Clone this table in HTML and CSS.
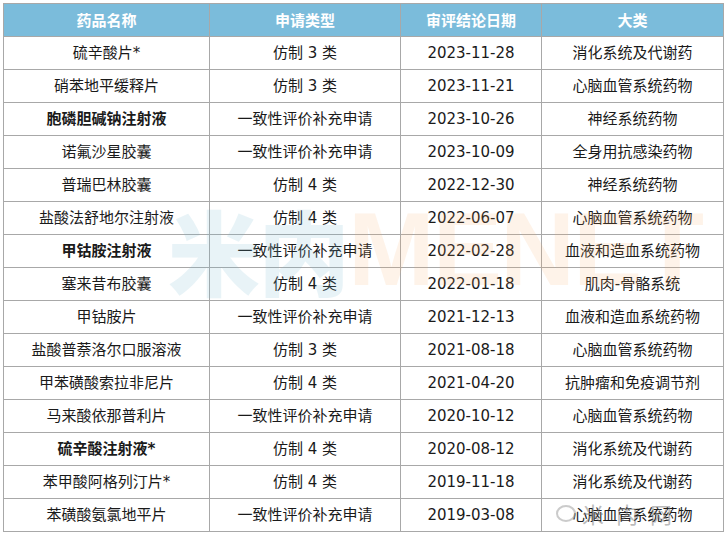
FILE: index.html
```html
<!DOCTYPE html>
<html lang="zh">
<head>
<meta charset="utf-8">
<link rel="stylesheet" href="styles.css">
</head>
<body>
<div class="wrap">
<table class="drugs">
<colgroup><col class="c1"><col class="c2"><col class="c3"><col class="c4"></colgroup>
<thead>
<tr><th>药品名称</th><th>申请类型</th><th>审评结论日期</th><th>大类</th></tr>
</thead>
<tbody>
<tr><td>硫辛酸片*</td><td>仿制 3 类</td><td>2023-11-28</td><td>消化系统及代谢药</td></tr>
<tr><td>硝苯地平缓释片</td><td>仿制 3 类</td><td>2023-11-21</td><td>心脑血管系统药物</td></tr>
<tr><td class="b">胞磷胆碱钠注射液</td><td>一致性评价补充申请</td><td>2023-10-26</td><td>神经系统药物</td></tr>
<tr><td>诺氟沙星胶囊</td><td>一致性评价补充申请</td><td>2023-10-09</td><td>全身用抗感染药物</td></tr>
<tr><td>普瑞巴林胶囊</td><td>仿制 4 类</td><td>2022-12-30</td><td>神经系统药物</td></tr>
<tr><td>盐酸法舒地尔注射液</td><td>仿制 4 类</td><td>2022-06-07</td><td>心脑血管系统药物</td></tr>
<tr><td class="b">甲钴胺注射液</td><td>一致性评价补充申请</td><td>2022-02-28</td><td>血液和造血系统药物</td></tr>
<tr><td>塞来昔布胶囊</td><td>仿制 4 类</td><td>2022-01-18</td><td>肌肉-骨骼系统</td></tr>
<tr><td>甲钴胺片</td><td>一致性评价补充申请</td><td>2021-12-13</td><td>血液和造血系统药物</td></tr>
<tr><td>盐酸普萘洛尔口服溶液</td><td>仿制 3 类</td><td>2021-08-18</td><td>心脑血管系统药物</td></tr>
<tr><td>甲苯磺酸索拉非尼片</td><td>仿制 4 类</td><td>2021-04-20</td><td>抗肿瘤和免疫调节剂</td></tr>
<tr><td>马来酸依那普利片</td><td>一致性评价补充申请</td><td>2020-10-12</td><td>心脑血管系统药物</td></tr>
<tr><td class="b">硫辛酸注射液*</td><td>仿制 4 类</td><td>2020-08-12</td><td>消化系统及代谢药</td></tr>
<tr><td>苯甲酸阿格列汀片*</td><td>仿制 4 类</td><td>2019-11-18</td><td>消化系统及代谢药</td></tr>
<tr><td>苯磺酸氨氯地平片</td><td>一致性评价补充申请</td><td>2019-03-08</td><td>心脑血管系统药物</td></tr>
</tbody>
</table>
<div class="mark"><span class="mk-cn">米内</span><span class="mk-en">MENET</span></div>
<div class="wx"><span class="wx-icon"></span><span class="wx-text">米内网</span></div>
</div>
</body>
</html>
```

FILE: styles.css
```css
html, body {
  margin: 0;
  padding: 0;
  background: #ffffff;
}
body {
  padding: 3px;
  font-family: "DejaVu Sans", "Noto Sans CJK SC", sans-serif;
}
.wrap {
  position: relative;
  width: 720px;
}
.drugs {
  border-collapse: collapse;
  width: 720px;
  table-layout: fixed;
  font-size: 15px;
  color: #1a1a1a;
}
.c1 { width: 206px; }
.c2 { width: 191px; }
.c3 { width: 141px; }
.c4 { width: 182px; }
.drugs th, .drugs td {
  border: 1px solid #a8a8a8;
  text-align: center;
  padding: 0;
  height: 32px;
  white-space: nowrap;
  line-height: 20px;
}
.drugs th {
  background: #7bbcdb;
  color: #ffffff;
  font-weight: bold;
  font-family: "Noto Sans CJK SC", sans-serif;
}
.drugs td.b {
  font-weight: bold;
}
.mark {
  position: absolute;
  left: 165px;
  top: 196px;
  display: flex;
  align-items: center;
  pointer-events: none;
  font-family: "Noto Sans CJK SC", sans-serif;
  font-weight: 900;
  font-size: 92px;
  line-height: 100px;
  letter-spacing: -2px;
  z-index: 2;
}
.mk-cn {
  color: rgba(120, 185, 210, 0.17);
}
.mk-en {
  color: rgba(250, 170, 100, 0.14);
  font-family: "Liberation Sans", sans-serif;
  font-size: 104px;
}
.wx {
  position: absolute;
  left: 553px;
  top: 496px;
  display: flex;
  align-items: center;
  gap: 6px;
  pointer-events: none;
  z-index: 3;
}
.wx-icon {
  width: 20px;
  height: 17px;
  border: 2px solid rgba(160, 160, 160, 0.55);
  border-radius: 50%;
  box-sizing: border-box;
}
.wx-text {
  font-family: "Noto Sans CJK SC", sans-serif;
  font-size: 22px;
  line-height: 28px;
  letter-spacing: 12px;
  color: rgba(120, 120, 120, 0.5);
}
```
